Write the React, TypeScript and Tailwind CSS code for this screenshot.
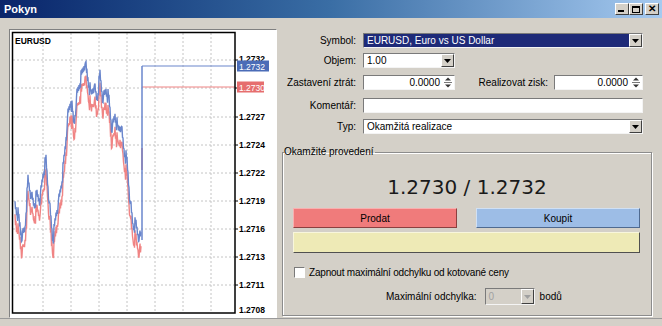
import React from 'react';

const keys: [number, number][] = [
  [15, 205], [18, 215], [22, 238], [25, 228], [28, 180], [31, 195], [34, 205], [37, 195],
  [40, 200], [43, 175], [46, 160], [49, 200], [53, 240], [56, 215], [59, 200], [62, 180],
  [65, 150], [68, 115], [71, 100], [74, 125], [77, 95], [80, 82], [83, 70], [85, 62],
  [88, 80], [91, 95], [94, 85], [97, 100], [100, 75], [103, 100], [106, 90], [109, 100],
  [112, 130], [115, 115], [118, 130], [121, 125], [124, 150], [127, 162], [130, 200],
  [133, 225], [136, 225], [139, 238], [141, 236],
];

const interp = (x: number) => {
  for (let i = 0; i < keys.length - 1; i++) {
    const [x0, y0] = keys[i];
    const [x1, y1] = keys[i + 1];
    if (x >= x0 && x <= x1) return y0 + ((y1 - y0) * (x - x0)) / (x1 - x0);
  }
  return keys[keys.length - 1][1];
};

// tick-style zigzag: every pixel gets a small up/down jump
const bluePts: [number, number][] = [];
const redPts: [number, number][] = [];
for (let x = 15; x <= 141; x += 0.5) {
  const k = Math.round(x * 2);
  const n = (((k * 37) % 9) - 4) * 1.3 + (k % 2 === 0 ? -2.5 : 2.5);
  const y = interp(x) + n;
  bluePts.push([x, y]);
  redPts.push([x, y + 15 + (((k * 13) % 5) - 2)]);
}
const toPath = (pts: [number, number][]) =>
  pts.map(([x, y], i) => `${i ? 'L' : 'M'}${x} ${y.toFixed(1)}`).join(' ');

const axis: [string, number][] = [
  ['1.2727', 117], ['1.2724', 145], ['1.2722', 173], ['1.2719', 201],
  ['1.2716', 229], ['1.2713', 257], ['1.2711', 285], ['1.2708', 310],
];
const gridY = [60, 88, 117, 145, 173, 201, 229, 257, 285];
const gridX = [43, 71, 99, 127, 155, 183, 211];
const font = 'Liberation Sans, Arial, sans-serif';

const Chart = () => (
  <svg width="266" height="287" viewBox="10 30 266 287" className="block">
    {gridX.map((x) => (
      <line key={x} x1={x} y1={33} x2={x} y2={312} stroke="#c4c4c4" strokeDasharray="2 2" />
    ))}
    {gridY.map((y) => (
      <line key={y} x1={13} y1={y} x2={234} y2={y} stroke="#c4c4c4" strokeDasharray="2 2" />
    ))}
    <path d={toPath(redPts)} fill="none" stroke="#f08484" strokeWidth="1.4" />
    <path d={toPath(bluePts)} fill="none" stroke="#6a86cc" strokeWidth="1.4" />
    <line x1={142} y1={148} x2={142} y2={170} stroke="#e06a6a" strokeWidth="1.5" />
    <line x1={142} y1={87} x2={235} y2={87} stroke="#f08484" strokeWidth="1.2" />
    <line x1={142} y1={66} x2={235} y2={66} stroke="#6a86cc" strokeWidth="1.2" />
    <line x1={142} y1={66} x2={142} y2={240} stroke="#6a86cc" strokeWidth="1.5" />
    <rect x={12.5} y={32.5} width={222.5} height={280.5} fill="none" stroke="#000" strokeWidth="1.5" />
    <text x={15} y={44} fontSize="8.5" fontWeight="bold" fontFamily={font}>EURUSD</text>
    {gridY.map((y) => (
      <line key={'t' + y} x1={235} y1={y} x2={238} y2={y} stroke="#000" />
    ))}
    <text x={239} y={62} fontSize="8.5" fontWeight="bold" fontFamily={font}>1.2732</text>
    {axis.map(([t, y]) => (
      <text key={t} x={239} y={y + 3} fontSize="8.5" fontWeight="bold" fontFamily={font}>
        {t}
      </text>
    ))}
    <rect x={237} y={60.5} width={32} height={11} fill="#4b6cb7" />
    <text x={239} y={69.5} fontSize="8.5" fill="#fff" fontFamily={font}>1.2732</text>
    <rect x={237} y={81.5} width={27} height={11} fill="#e66e6e" />
    <text x={239} y={90.5} fontSize="8.5" fill="#fff" fontFamily={font}>1.2730</text>
  </svg>
);

const DropButton = ({ disabled }: { disabled?: boolean }) => (
  <div className="w-[13px] h-full bg-[#d4d0c8] border border-t-white border-l-white border-b-[#404040] border-r-[#404040] flex items-center justify-center shrink-0">
    <svg width="7" height="4" viewBox="0 0 7 4">
      <path d="M0 0h7L3.5 4z" fill={disabled ? '#a0a0a0' : '#000'} />
    </svg>
  </div>
);

const Spinner = () => (
  <svg width="10" height="13" viewBox="0 0 10 13" className="shrink-0 mr-[1px]">
    <path d="M5 1.5L8 4.5H2z" fill="#333" />
    <line x1="1" y1="6.5" x2="9" y2="6.5" stroke="#777" />
    <path d="M5 11.5L8 8.5H2z" fill="#333" />
  </svg>
);

const fieldCls =
  'h-[15px] bg-white border border-t-[#7a7a7a] border-l-[#7a7a7a] border-b-[#f4f4f4] border-r-[#f4f4f4] flex items-center';

const Label = ({ children }: { children: React.ReactNode }) => (
  <div className="w-[75px] shrink-0 text-right pr-[1px]">{children}</div>
);

const TitleButton = ({ children }: { children: React.ReactNode }) => (
  <div className="w-[14px] h-[12px] bg-[#d4d0c8] border border-t-white border-l-white border-b-[#404040] border-r-[#404040] flex items-center justify-center">
    {children}
  </div>
);

export default function App() {
  return (
    <div className="w-[662px] h-[326px] bg-[#d4d0c8] flex flex-col font-['Liberation_Sans',Arial,sans-serif] text-[10px] text-black overflow-hidden">
      {/* title bar */}
      <div className="h-[18px] shrink-0 bg-gradient-to-r from-[#0a246a] via-[#3a6ea5] to-[#a6caf0] flex items-center justify-between pl-[4px] pr-[3px]">
        <span className="text-white font-bold text-[11px]">Pokyn</span>
        <div className="flex items-center">
          <TitleButton>
            <div className="w-[6px] h-[2px] bg-black self-end mb-[2px] -ml-[2px]" />
          </TitleButton>
          <TitleButton>
            <div className="w-[8px] h-[7px] border border-black border-t-2" />
          </TitleButton>
          <div className="ml-[2px]">
            <TitleButton>
              <span className="font-bold text-[10px] leading-none">✕</span>
            </TitleButton>
          </div>
        </div>
      </div>

      <div className="h-[301px] flex border-b border-[#9a9a9a]">
        {/* chart */}
        <div className="pl-[9px] pt-[11px]">
          <div className="w-[268px] h-[289px] bg-white border border-t-[#808080] border-l-[#808080] border-b-white border-r-white">
            <Chart />
          </div>
        </div>

        {/* form */}
        <div className="ml-[5px] w-[370px] pt-[15px] flex flex-col">
          <div className="flex items-center gap-[6px]">
            <Label>Symbol:</Label>
            <div className={`${fieldCls} w-[280px]`}>
              <div className="flex-1 h-full bg-[#1e2a78] text-white pl-[3px] flex items-center">EURUSD, Euro vs US Dollar</div>
              <DropButton />
            </div>
          </div>

          <div className="flex items-center gap-[6px] mt-[5px]">
            <Label>Objem:</Label>
            <div className={`${fieldCls} w-[92px]`}>
              <div className="flex-1 pl-[3px]">1.00</div>
              <DropButton />
            </div>
          </div>

          <div className="flex items-center mt-[7px]">
            <Label>Zastavení ztrát:</Label>
            <div className={`${fieldCls} w-[92px] ml-[6px]`}>
              <div className="flex-1 text-right pr-[3px]">0.0000</div>
              <Spinner />
            </div>
            <div className="w-[93px] text-right">Realizovat zisk:</div>
            <div className={`${fieldCls} w-[89px] ml-[6px]`}>
              <div className="flex-1 text-right pr-[3px]">0.0000</div>
              <Spinner />
            </div>
          </div>

          <div className="flex items-center gap-[6px] mt-[8px]">
            <Label>Komentář:</Label>
            <div className={`${fieldCls} w-[280px]`} />
          </div>

          <div className="flex items-center gap-[6px] mt-[6px]">
            <Label>Typ:</Label>
            <div className={`${fieldCls} w-[280px]`}>
              <div className="flex-1 pl-[3px]">Okamžitá realizace</div>
              <DropButton />
            </div>
          </div>

          <fieldset className="mt-[12px] h-[170px] border border-[#8c8c8c] shadow-[1px_1px_0_#fff,inset_1px_1px_0_#fff] px-0">
            <legend className="ml-[1px] pr-[1px] leading-[12px]">Okamžité provedení</legend>
            <div className="text-center text-[20px] font-['DejaVu_Sans',sans-serif] text-[#1a1a1a] leading-[24px] mt-[17px]">
              1.2730 / 1.2732
            </div>
            <div className="flex gap-[19px] pl-[10px] mt-[9px]">
              <div className="w-[164px] h-[20px] bg-[#f07b7b] border border-t-[#f8b0b0] border-l-[#f8b0b0] border-b-[#8c4040] border-r-[#8c4040] flex items-center justify-center">
                Prodat
              </div>
              <div className="w-[164px] h-[20px] bg-[#9dbde6] border border-t-[#d0e0f4] border-l-[#d0e0f4] border-b-[#4f6a90] border-r-[#4f6a90] flex items-center justify-center">
                Koupit
              </div>
            </div>
            <div className="ml-[10px] mt-[4px] w-[347px] h-[21px] bg-[#eeeab6] border border-t-[#f8f6dc] border-l-[#f8f6dc] border-b-[#505050] border-r-[#505050]" />
            <div className="flex items-center ml-[11px] mt-[12px]">
              <div className="w-[11px] h-[11px] bg-white border border-t-[#7a7a7a] border-l-[#7a7a7a] border-b-white border-r-white" />
              <span className="ml-[4px] tracking-[-0.2px]">Zapnout maximální odchylku od kotované ceny</span>
            </div>
            <div className="flex items-center ml-[103px] mt-[8px]">
              <span>Maximální odchylka:</span>
              <div className={`${fieldCls} !h-[17px] w-[50px] ml-[8px] !bg-[#d4d0c8]`}>
                <div className="flex-1 pl-[3px] text-[#a0a0a0]">0</div>
                <DropButton disabled />
              </div>
              <span className="ml-[5px]">bodů</span>
            </div>
          </fieldset>
        </div>
      </div>
    </div>
  );
}
